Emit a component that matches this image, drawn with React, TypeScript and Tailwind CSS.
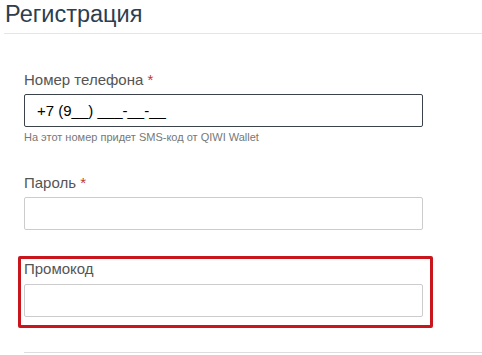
const labelCls = "block text-[15px] leading-[20px] text-[#555555]";
const inputCls =
  "block w-full h-[33px] px-[12px] rounded-[2px] border border-[#cccccc] bg-white text-[15px] text-black outline-none";

const Star = () => <span className="text-[#c0392b]"> *</span>;

export default function App() {
  return (
    <div className="w-[482px] h-[355px] overflow-hidden bg-white font-['Liberation_Sans',Arial,sans-serif]">
      <div className="ml-[4px] pb-[4px] border-b border-[#e3e6e8]">
        <h1 className="pl-[1px] text-[23.5px] leading-[29px] text-[#2c3e50] font-normal">Регистрация</h1>
      </div>

      <form className="ml-[24px] w-[399px]">
        <div className="mt-[36px]">
          <label className={`${labelCls} mb-[4px]`}>
            Номер телефона
            <Star />
          </label>
          <input
            type="text"
            defaultValue="+7 (9__) ___-__-__"
            className="block w-full h-[33px] px-[12px] rounded-[2px] border border-[#3b4249] bg-white text-[15px] text-black outline-none"
          />
          <p className="mt-[3px] text-[11px] leading-[15px] text-[#777777]">
            На этот номер придет SMS-код от QIWI Wallet
          </p>
        </div>

        <div className="mt-[28px]">
          <label className={`${labelCls} mb-[4px]`}>
            Пароль
            <Star />
          </label>
          <input type="password" className={inputCls} />
        </div>

        <div className="mt-[26px] -ml-[6px] w-[415px] border-[3px] border-[#c9161d] rounded-[2px] pl-[3px] pr-[7px] pb-[8px]">
          <label className={`${labelCls} mb-[5px]`}>Промокод</label>
          <input type="text" className={inputCls} />
        </div>
      </form>

      <div className="mt-[24px] ml-[24px] border-t border-[#dddddd]" />
    </div>
  );
}
